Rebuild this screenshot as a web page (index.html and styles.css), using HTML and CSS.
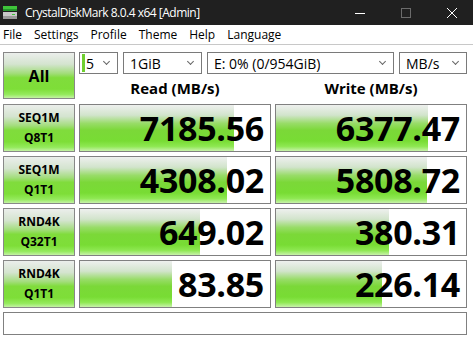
FILE: index.html
```html
<!DOCTYPE html>
<html lang="en">

<head>
  <meta charset="UTF-8">
  <meta name="viewport" content="width=device-width, initial-scale=1.0">
  <title>CrystalDiskMark 8.0.4 x64 [Admin]</title>
  <link rel="stylesheet" href="styles.css">
</head>

<body>
  <div class="titlebar">
    <svg class="app-icon" width="14" height="13" viewBox="0 0 14 13">
      <rect x="0" y="0" width="14" height="3" fill="#3fc43a" />
      <rect x="0" y="3" width="14" height="2" fill="#23952a" />
      <rect x="0" y="6" width="14" height="7" fill="#c9c9c9" />
      <rect x="0" y="10" width="14" height="3" fill="#9a9a9a" />
      <rect x="9" y="8" width="3" height="1" fill="#3fc43a" />
    </svg>
    <span class="title">CrystalDiskMark 8.0.4 x64 [Admin]</span>
    <div class="controls">
      <svg class="ctl" width="12" height="12" viewBox="0 0 12 12"><path d="M1 6.5h10" stroke="#fff" stroke-width="1" /></svg>
      <svg class="ctl" width="12" height="12" viewBox="0 0 12 12"><rect x="1.5" y="1.5" width="9" height="9" fill="none" stroke="#6b6b6b" /></svg>
      <svg class="ctl" width="12" height="12" viewBox="0 0 12 12"><path d="M1 1l10 10M11 1L1 11" stroke="#fff" stroke-width="1" /></svg>
    </div>
  </div>

  <div class="menubar">
    <span>File</span>
    <span>Settings</span>
    <span>Profile</span>
    <span>Theme</span>
    <span>Help</span>
    <span>Language</span>
  </div>

  <div class="main">
    <button class="btn btn-all">All</button>

    <div class="top">
      <div class="selects">
        <div class="select s-count"><span class="mark"></span><span>5</span><i class="chev"></i></div>
        <div class="select s-size"><span>1GiB</span><i class="chev"></i></div>
        <div class="select s-drive"><span>E: 0% (0/954GiB)</span><i class="chev"></i></div>
        <div class="select s-unit"><span>MB/s</span><i class="chev"></i></div>
      </div>
      <div class="heads">
        <div class="head">Read (MB/s)</div>
        <div class="head">Write (MB/s)</div>
      </div>
    </div>

    <button class="btn">SEQ1M<br>Q8T1</button>
    <div class="cell" style="background-size: 154px 100%">7185.56</div>
    <div class="cell" style="background-size: 152px 100%">6377.47</div>

    <button class="btn">SEQ1M<br>Q1T1</button>
    <div class="cell" style="background-size: 147px 100%">4308.02</div>
    <div class="cell" style="background-size: 151px 100%">5808.72</div>

    <button class="btn">RND4K<br>Q32T1</button>
    <div class="cell" style="background-size: 120px 100%">649.02</div>
    <div class="cell" style="background-size: 113px 100%">380.31</div>

    <button class="btn">RND4K<br>Q1T1</button>
    <div class="cell" style="background-size: 92px 100%">83.85</div>
    <div class="cell" style="background-size: 106px 100%">226.14</div>

    <div class="comment"></div>
  </div>
</body>

</html>
```

FILE: styles.css
```css
/* base */
* {
  margin: 0;
  padding: 0;
  box-sizing: border-box;
}

body {
  width: 473px;
  height: 343px;
  background: #fff;
  font-family: "Open Sans", "Noto Sans", sans-serif;
  color: #000;
  overflow: hidden;
}

/* title bar */
.titlebar {
  height: 25px;
  background: #202020;
  display: flex;
  align-items: center;
  padding-left: 3px;
}

.app-icon {
  margin-top: -1px;
}

.title {
  color: #fff;
  font-size: 12px;
  letter-spacing: -0.5px;
  margin-left: 8px;
}

.controls {
  margin-left: auto;
  display: flex;
  align-items: center;
}

.ctl {
  margin: 0 17px;
}

.ctl:last-child {
  margin-right: 15px;
}

/* menu */
.menubar {
  height: 20px;
  display: flex;
  align-items: center;
  font-size: 12px;
  border-bottom: 1px solid #c8c8c8;
  padding-left: 3px;
}

.menubar span {
  margin-right: 12px;
}

/* main grid */
.main {
  display: grid;
  grid-template-columns: 72px 192px 192px;
  grid-template-rows: 48px 48px 48px 48px 48px 23px;
  gap: 4px;
  padding: 7px 0 0 3px;
}

.btn {
  border: 1px solid #888;
  font-family: inherit;
  font-weight: bold;
  font-size: 12px;
  line-height: 20px;
  color: #000;
  background: linear-gradient(to bottom, #ebeeeb 0%, #d4e4cf 25%, #a3dd7c 45%, #80dc3c 55%, #7ede38 80%, #94ea5c 92%, #c4f2a4 100%);
}

.btn-all {
  font-size: 16px;
  height: 47px;
}

.top {
  grid-column: 2 / 4;
  display: flex;
  flex-direction: column;
}

.selects {
  display: flex;
  gap: 5px;
  height: 24px;
}

.select {
  border: 1px solid #7a7a7a;
  background: #fff;
  display: flex;
  align-items: center;
  font-size: 14px;
  padding-left: 4px;
  padding-right: 8px;
}

.s-count { width: 39px; padding-left: 2px; }
.s-size { width: 79px; padding-left: 6px; }
.s-drive { width: 187px; padding-left: 6px; }
.s-unit { width: 68px; padding-left: 6px; }

.mark {
  width: 3px;
  height: 18px;
  background: #6fcf2f;
  margin-right: 1px;
}

.chev {
  margin-left: auto;
  width: 5px;
  height: 5px;
  border-right: 1px solid #666;
  border-bottom: 1px solid #666;
  transform: rotate(45deg);
  margin-top: -3px;
}

.heads {
  display: flex;
  gap: 4px;
  flex: 1;
}

.head {
  width: 192px;
  text-align: center;
  font-weight: bold;
  font-size: 15px;
  line-height: 24px;
  padding-top: 2px;
}

.cell {
  border: 1px solid #808080;
  background-color: #fff;
  background-image: linear-gradient(to bottom, #eef0ee 0%, #d2e4cc 22%, #98dc68 40%, #7bd838 55%, #78dc34 78%, #8ee852 90%, #c8f2aa 100%);
  background-repeat: no-repeat;
  font-weight: bold;
  font-size: 34px;
  text-align: right;
  line-height: 46px;
  padding-right: 6px;
  letter-spacing: -0.3px;
}

.comment {
  grid-column: 1 / 4;
  border: 1px solid #808080;
  background: #fff;
}
```
